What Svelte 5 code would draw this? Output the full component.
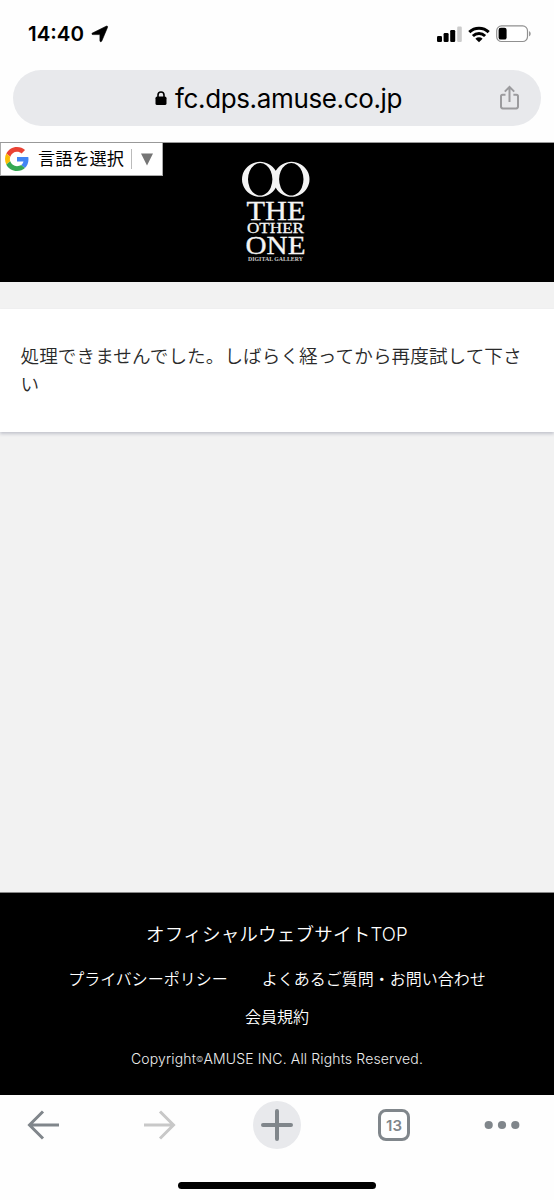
<script lang="ts">
  const host = "fc.dps.amuse.co.jp";
  const message = "処理できませんでした。しばらく経ってから再度試して下さい";
  const links = ["プライバシーポリシー", "よくあるご質問・お問い合わせ", "会員規約"];
  let tabCount = 13;
</script>

<div class="screen">
  <div class="status">
    <span class="time">14:40</span>
    <svg class="location" width="18" height="18" viewBox="0 0 18 18">
      <path d="M1.5 8 15.2 1.2c1-.5 1.700.2 1.300 1.200L10.800 16c-.5 1.100-1.900.9-1.900-.3V9.600H2C.7 9.600.4 8.500 1.500 8Z" stroke="#000" stroke-width="0.6" />
    </svg>
    <svg class="signal" width="26" height="17" viewBox="0 0 26 17">
      <rect x="0" y="10" width="5" height="6" rx="1.2" />
      <rect x="6.6" y="7" width="5" height="9" rx="1.2" />
      <rect x="13.2" y="4" width="5" height="12" rx="1.2" />
      <rect x="20.2" y="0.5" width="4.6" height="15.5" rx="1.2" fill="#ccc" />
    </svg>
    <svg class="wifi" width="22" height="17" viewBox="0 0 22 17">
      <g fill="none" stroke="#000" stroke-width="3">
        <path d="M1.3 6.1a14 14 0 0 1 19.4 0" />
        <path d="M4.9 10a8.8 8.8 0 0 1 12.2 0" />
      </g>
      <path d="M7.4 12.7a5.2 5.2 0 0 1 7.2 0L11 16.3Z" />
    </svg>
    <svg class="battery" width="36" height="18" viewBox="0 0 36 18">
      <rect x="0.7" y="0.9" width="30.8" height="15.6" rx="4.8" fill="#fff" stroke="#909090" stroke-width="1.2" />
      <rect x="2.6" y="2.8" width="8" height="11.8" rx="2.2" />
      <path d="M33 6.2c2.3.6 2.3 4.4 0 5Z" fill="#999" />
    </svg>
  </div>

  <div class="address">
    <svg class="lock" width="12" height="15" viewBox="0 0 12 15">
      <path d="M3 7V4a3 3 0 0 1 6 0v3" fill="none" stroke="#000" stroke-width="1.6" />
      <rect x="0.5" y="5.6" width="11" height="8.4" rx="1.6" />
    </svg>
    <span class="host">{host}</span>
    <svg class="share" width="22" height="26" viewBox="0 0 22 26">
      <g fill="none" stroke="#9b9b9e" stroke-width="2">
        <path d="M6.5 9.7H3.6Q2 9.7 2 11.3v10.3q0 1.8 1.8 1.8h13.4q1.8 0 1.8-1.8V11.3q0-1.6-1.6-1.6h-3" />
        <path d="M10.5 17V2.5M5.8 6.6l4.700-4.700 4.700 4.700" />
      </g>
    </svg>
  </div>

  <div class="page">
    <header>
      <div class="translate">
        <svg width="24" height="24" viewBox="0 0 48 48">
          <path fill="#ea4335" d="M24 9.5c3.5 0 6.7 1.2 9.2 3.6l6.9-6.9C35.9 2.4 30.5 0 24 0 14.6 0 6.5 5.4 2.6 13.2l8 6.2C12.4 13.7 17.7 9.5 24 9.5z" />
          <path fill="#4285f4" d="M47 24.600c0-1.600-.2-3.100-.4-4.600H24v9h12.900c-.6 3-2.200 5.500-4.700 7.200l7.700 6C44.400 38 47 31.800 47 24.600z" />
          <path fill="#fbbc05" d="M10.500 28.600c-.5-1.500-.8-3-.8-4.600s.3-3.100.8-4.600l-8-6.200C1 16.500 0 20.100 0 24s.9 7.500 2.600 10.800l7.900-6.200z" />
          <path fill="#34a853" d="M24 48c6.500 0 11.900-2.100 15.900-5.800l-7.700-6c-2.100 1.500-4.900 2.300-8.200 2.300-6.300 0-11.600-4.200-13.500-9.900l-8 6.200C6.500 42.600 14.600 48 24 48z" />
        </svg>
        <span class="label">言語を選択</span>
        <svg class="caret" width="12" height="13" viewBox="0 0 12 13">
          <path d="M0 0.5h12L6 12.5Z" fill="#757575" />
        </svg>
      </div>
      <svg class="logo" width="70" height="104" viewBox="0 0 70 104" fill="#f4f4f4">
        <path fill-rule="evenodd" d="M19 1.8a18 17.5 0 1 0 .01 0ZM19.200 3.100a12.200 16.200 0 1 1-.01 0Z" />
        <path fill-rule="evenodd" d="M50.500 1.800a18 17.500 0 1 0 .01 0ZM50.300 3.100a12.200 16.200 0 1 1-.01 0Z" />
        <g font-family="'Liberation Serif', serif" stroke="#f4f4f4" stroke-width="0.3">
          <text x="5.5" y="59.5" font-size="26.5" textLength="59" lengthAdjust="spacingAndGlyphs">THE</text>
          <text x="6" y="72.500" font-size="14.500" textLength="57" lengthAdjust="spacingAndGlyphs">OTHER</text>
          <text x="4.500" y="93.500" font-size="25.500" textLength="60" lengthAdjust="spacingAndGlyphs">ONE</text>
        </g>
        <text class="gallery" x="7" y="101.300" font-size="5.800" textLength="55">DIGITAL GALLERY</text>
      </svg>
    </header>

    <main>
      <p>{message}</p>
    </main>

    <footer>
      <a class="top" href="#top">オフィシャルウェブサイトTOP</a>
      <nav>
        {#each links as link}
          <a href="#top">{link}</a>
        {/each}
      </nav>
      <small>Copyright<span class="mark">©</span>AMUSE INC. All Rights Reserved.</small>
    </footer>
  </div>

  <div class="toolbar">
    <svg width="34" height="30" viewBox="0 0 34 30" fill="none" stroke="#80868b" stroke-width="3">
      <path d="M33 15H3M17 1.5 3.500 15 17 28.500" />
    </svg>
    <svg width="34" height="30" viewBox="0 0 34 30" fill="none" stroke="#c8c8c8" stroke-width="3">
      <path d="M1 15h30M17 1.5 30.500 15 17 28.500" />
    </svg>
    <div class="add">
      <svg width="34" height="34" viewBox="0 0 34 34" fill="none" stroke="#80868b" stroke-width="4" stroke-linecap="round">
        <path d="M3 17h28M17 3v28" />
      </svg>
    </div>
    <div class="tabs">{tabCount}</div>
    <svg width="36" height="10" viewBox="0 0 36 10" fill="#80868b">
      <circle cx="4.7" cy="5" r="4.1" />
      <circle cx="18" cy="5" r="4.1" />
      <circle cx="31.3" cy="5" r="4.1" />
    </svg>
  </div>
  <div class="home"></div>
</div>

<style>
  :global(body) {
    margin: 0;
    background: #fff;
  }
  .screen {
    width: 554px;
    height: 1200px;
    display: flex;
    flex-direction: column;
    overflow: hidden;
    background: #fefefe;
    font-family: Inter, "Noto Sans CJK JP", sans-serif;
  }
  svg {
    flex: none;
    display: block;
  }
  .status {
    display: flex;
    flex: none;
    align-items: center;
    height: 68px;
    padding: 0 22px 0 28px;
    box-sizing: border-box;
  }
  .time {
    width: 58px;
    padding-bottom: 2px;
    font-size: 20.5px;
    font-weight: 600;
    white-space: nowrap;
  }
  .location {
    margin-left: 5px;
  }
  .signal {
    margin-left: auto;
  }
  .wifi {
    margin-left: 5px;
  }
  .battery {
    margin-left: 6px;
  }
  .address {
    display: flex;
    align-items: center;
    flex: none;
    height: 56px;
    margin: 2px 13px 16px;
    padding: 0 20px 0 142px;
    border-radius: 28px;
    background: #e8e9ec;
  }
  .host {
    margin-left: 8px;
    font-size: 26px;
    letter-spacing: -0.36px;
    white-space: nowrap;
  }
  .share {
    margin-left: auto;
  }
  .page {
    display: flex;
    flex: none;
    flex-direction: column;
    height: 953px;
    background: #f2f2f2;
  }
  header {
    display: flex;
    flex: none;
    align-items: flex-start;
    height: 140px;
    background: #000;
    border-top: 1px solid #999;
    box-sizing: border-box;
  }
  .translate {
    display: flex;
    align-items: center;
    width: 163px;
    height: 33px;
    padding: 0 9px 0 4px;
    box-sizing: border-box;
    border: 1px solid #aaa;
    border-top: 0;
    background: #fff;
  }
  .label {
    margin-left: 9px;
    padding-right: 7px;
    border-right: 1px solid #bbb;
    font-size: 17.2px;
    line-height: 20px;
    white-space: nowrap;
  }
  .caret {
    margin-left: auto;
  }
  .logo {
    margin: 17px 0 0 78px;
  }
  .gallery {
    font-family: "Liberation Serif", serif;
    font-weight: bold;
    fill: #ccc;
  }
  main {
    flex: none;
    height: 123px;
    margin-top: 27px;
    padding: 34px 20px 0 20.5px;
    box-sizing: border-box;
    background: #fff;
    box-shadow: 0 2px 3px rgba(60, 64, 100, 0.25);
  }
  p {
    margin: 0;
    color: #2a2a2a;
    font-size: 18.6px;
    line-height: 27.5px;
    font-weight: 350;
    letter-spacing: 0.08px;
  }
  footer {
    display: flex;
    flex: none;
    flex-direction: column;
    align-items: center;
    height: 203px;
    margin-top: auto;
    padding-top: 26px;
    box-sizing: border-box;
    background: #000;
    border-top: 1px solid #888;
    color: #fff;
    font-weight: 350;
  }
  footer a {
    color: inherit;
    text-decoration: none;
  }
  .top {
    font-size: 18.6px;
    line-height: 30px;
    letter-spacing: 0.13px;
  }
  nav {
    display: flex;
    flex-wrap: wrap;
    justify-content: center;
    column-gap: 34px;
    width: 440px;
    margin-top: 11px;
    font-size: 16px;
    line-height: 38px;
  }
  small {
    margin-top: 13px;
    font-size: 14px;
    line-height: 20px;
    letter-spacing: 0.14px;
    color: #eee;
  }
  .mark {
    font-size: 8px;
    vertical-align: 2px;
  }
  .toolbar {
    display: grid;
    flex: none;
    grid-template-columns: 117px 110px 125px 106px 36px;
    align-items: center;
    height: 60px;
    padding-left: 26px;
  }
  .add {
    display: grid;
    place-items: center;
    width: 48px;
    height: 48px;
    border-radius: 50%;
    background: #e8e9ec;
  }
  .tabs {
    width: 32px;
    height: 32px;
    border: 3px solid #80868b;
    border-radius: 8px;
    box-sizing: border-box;
    color: #80868b;
    font-size: 15px;
    font-weight: 600;
    line-height: 27px;
    text-align: center;
  }
  .home {
    flex: none;
    width: 198px;
    height: 7px;
    margin: 27px auto 11px;
    border-radius: 4px;
    background: #000;
  }
</style>
